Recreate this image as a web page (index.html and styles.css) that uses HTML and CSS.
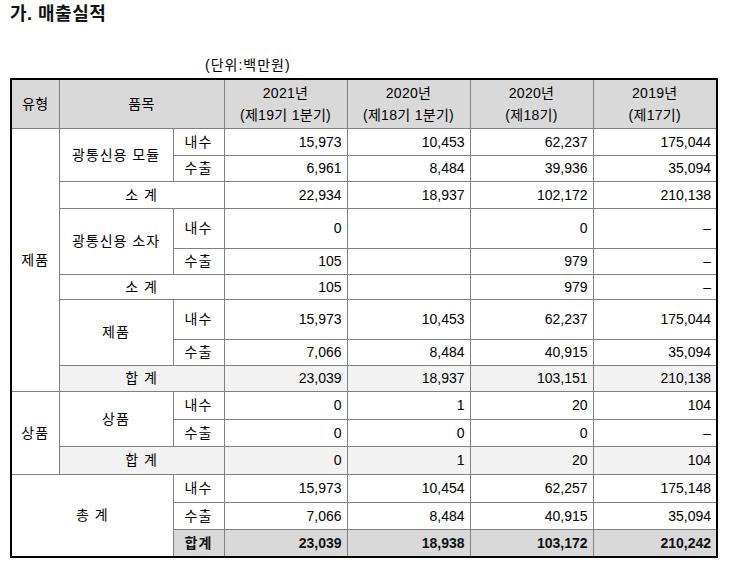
FILE: index.html
```html
<!DOCTYPE html>
<html lang="ko">
<head>
<meta charset="utf-8">
<title>매출실적</title>
<link rel="stylesheet" href="styles.css">
</head>
<body>
<h1 class="title">가. 매출실적</h1>
<div class="unit">(단위:백만원)</div>
<table class="sales">
  <colgroup>
    <col class="c-type"><col class="c-item"><col class="c-sub">
    <col class="c-num"><col class="c-num"><col class="c-num"><col class="c-num4">
  </colgroup>
  <thead>
    <tr class="h-head">
      <th>유형</th>
      <th colspan="2">품목</th>
      <th>2021년<br>(제19기 1분기)</th>
      <th>2020년<br>(제18기 1분기)</th>
      <th>2020년<br>(제18기)</th>
      <th>2019년<br>(제17기)</th>
    </tr>
  </thead>
  <tbody>
    <tr class="h27">
      <td class="lbl" rowspan="9">제품</td>
      <td class="lbl" rowspan="2">광통신용 모듈</td>
      <td class="lbl">내수</td>
      <td class="num">15,973</td><td class="num">10,453</td><td class="num">62,237</td><td class="num">175,044</td>
    </tr>
    <tr class="h26">
      <td class="lbl">수출</td>
      <td class="num">6,961</td><td class="num">8,484</td><td class="num">39,936</td><td class="num">35,094</td>
    </tr>
    <tr class="h27">
      <td class="lbl" colspan="2">소 계</td>
      <td class="num">22,934</td><td class="num">18,937</td><td class="num">102,172</td><td class="num">210,138</td>
    </tr>
    <tr class="h40">
      <td class="lbl" rowspan="2">광통신용 소자</td>
      <td class="lbl">내수</td>
      <td class="num">0</td><td class="num"></td><td class="num">0</td><td class="num">–</td>
    </tr>
    <tr class="h26">
      <td class="lbl">수출</td>
      <td class="num">105</td><td class="num"></td><td class="num">979</td><td class="num">–</td>
    </tr>
    <tr class="h25">
      <td class="lbl" colspan="2">소 계</td>
      <td class="num">105</td><td class="num"></td><td class="num">979</td><td class="num">–</td>
    </tr>
    <tr class="h40">
      <td class="lbl" rowspan="2">제품</td>
      <td class="lbl">내수</td>
      <td class="num">15,973</td><td class="num">10,453</td><td class="num">62,237</td><td class="num">175,044</td>
    </tr>
    <tr class="h26">
      <td class="lbl">수출</td>
      <td class="num">7,066</td><td class="num">8,484</td><td class="num">40,915</td><td class="num">35,094</td>
    </tr>
    <tr class="h26 sum">
      <td class="lbl" colspan="2">합 계</td>
      <td class="num">23,039</td><td class="num">18,937</td><td class="num">103,151</td><td class="num">210,138</td>
    </tr>
    <tr class="h28">
      <td class="lbl" rowspan="3">상품</td>
      <td class="lbl" rowspan="2">상품</td>
      <td class="lbl">내수</td>
      <td class="num">0</td><td class="num">1</td><td class="num">20</td><td class="num">104</td>
    </tr>
    <tr class="h27">
      <td class="lbl">수출</td>
      <td class="num">0</td><td class="num">0</td><td class="num">0</td><td class="num">–</td>
    </tr>
    <tr class="h28 sum">
      <td class="lbl" colspan="2">합 계</td>
      <td class="num">0</td><td class="num">1</td><td class="num">20</td><td class="num">104</td>
    </tr>
    <tr class="h28">
      <td class="lbl total" colspan="2" rowspan="3">총 계</td>
      <td class="lbl">내수</td>
      <td class="num">15,973</td><td class="num">10,454</td><td class="num">62,257</td><td class="num">175,148</td>
    </tr>
    <tr class="h27">
      <td class="lbl">수출</td>
      <td class="num">7,066</td><td class="num">8,484</td><td class="num">40,915</td><td class="num">35,094</td>
    </tr>
    <tr class="h28 grand">
      <td class="lbl">합계</td>
      <td class="num">23,039</td><td class="num">18,938</td><td class="num">103,172</td><td class="num">210,242</td>
    </tr>
  </tbody>
</table>
</body>
</html>
```
FILE: styles.css
```css
html, body {
  margin: 0;
  padding: 0;
  background: #ffffff;
}
body {
  padding: 4px 10px 0 10px;
  font-family: "Liberation Sans", "Noto Sans CJK KR", sans-serif;
  color: #000;
}
.title {
  margin: 0;
  font-size: 18px;
  line-height: 20px;
  font-weight: bold;
  color: #111;
  letter-spacing: 0.5px;
}
.unit {
  margin-top: 32px;
  padding-left: 195px;
  font-size: 14px;
  line-height: 18px;
  letter-spacing: 1px;
}
.sales {
  margin-top: 4px;
  border-collapse: collapse;
  table-layout: fixed;
  width: 706px;
  border: 2px solid #000;
  font-size: 14px;
}
.c-type { width: 48px; }
.c-item { width: 114px; }
.c-sub { width: 51px; }
.c-num { width: 123px; }
.c-num4 { width: 124px; }
.sales th, .sales td {
  border: 1px solid #808080;
  padding: 0 5px;
  vertical-align: middle;
  white-space: nowrap;
  overflow: hidden;
}
.sales th {
  background: #d9d9d9;
  font-weight: normal;
  text-align: center;
  line-height: 22px;
  letter-spacing: 0.3px;
}
.h-head { height: 49px; }
.h25 { height: 25px; }
.h26 { height: 26px; }
.h27 { height: 27px; }
.h28 { height: 28px; }
.h40 { height: 40px; }
.sales td { line-height: 16px; }
.lbl {
  text-align: center;
  letter-spacing: 1px;
}
.num {
  text-align: right;
}
.sum td { background: #f2f2f2; }
.grand td {
  background: #d9d9d9;
  font-weight: bold;
  color: #111;
}
.total { background: #fff; }
```
